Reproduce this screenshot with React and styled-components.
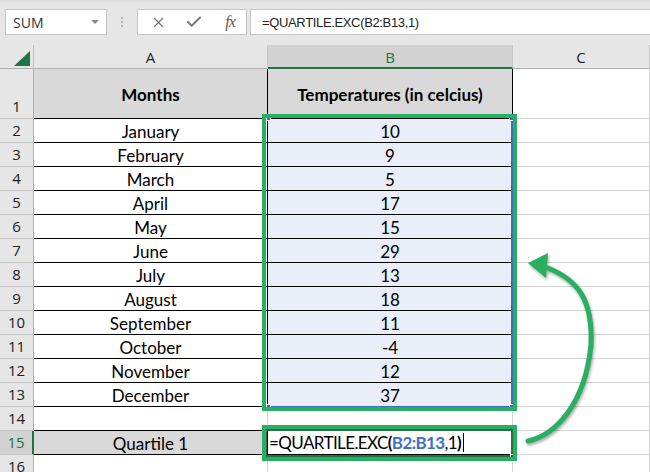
import React from 'react';
import styled, { createGlobalStyle, css } from 'styled-components';
import { X, Check } from 'lucide-react';

const GlobalStyle = createGlobalStyle`
  html, body {
    margin: 0;
    padding: 0;
    background: #ffffff;
    overflow: hidden;
  }
  * {
    box-sizing: border-box;
  }
`;

const GREEN = '#2aaf62';
const XL_GREEN = '#217346';
const GRID = '#d4d4d4';

const Page = styled.div`
  position: relative;
  width: 650px;
  height: 472px;
  overflow: hidden;
  font-family: 'Open Sans', 'Liberation Sans', sans-serif;
`;

const FormulaBar = styled.div`
  display: flex;
  align-items: flex-start;
  height: 45px;
  padding-top: 9px;
  background: linear-gradient(#d8d8d8 0, #e6e6e6 3px);
`;

const NameBox = styled.div`
  display: flex;
  align-items: center;
  justify-content: space-between;
  width: 102px;
  height: 26px;
  margin-left: 5px;
  padding: 0 7px 0 7px;
  background: #fff;
  border: 1px solid #c6c6c6;
  font-size: 14px;
  color: #333;
`;

const DropCaret = styled.span`
  width: 0;
  height: 0;
  border-left: 4px solid transparent;
  border-right: 4px solid transparent;
  border-top: 4px solid #8a8a8a;
`;

const Grip = styled.div`
  display: flex;
  flex-direction: column;
  align-items: center;
  gap: 2px;
  width: 30px;
  padding-top: 8px;
  span {
    width: 2px;
    height: 2px;
    background: #b4b4b4;
  }
`;

const FxBox = styled.div`
  display: grid;
  grid-template-columns: repeat(3, 36px);
  align-items: center;
  justify-items: center;
  width: 110px;
  height: 26px;
  padding-left: 2px;
  background: #fff;
  border: 1px solid #c6c6c6;
  color: #707070;
`;

const FxText = styled.span`
  font-family: 'Liberation Serif', 'DejaVu Serif', serif;
  font-style: italic;
  font-size: 16px;
  color: #5a5a5a;
  letter-spacing: -1px;
`;

const FormulaInput = styled.div`
  flex: 1;
  display: flex;
  align-items: center;
  height: 26px;
  margin-left: 3px;
  padding-left: 11px;
  background: #fff;
  border: 1px solid #c6c6c6;
  border-right: none;
  font-family: 'Liberation Sans', Arial, sans-serif;
  font-size: 13px;
  letter-spacing: -0.35px;
  color: #222;
`;

const Sheet = styled.div`
  position: relative;
  display: grid;
  grid-template-columns: 34px 234px 245px 1fr;
  grid-template-rows: 24px 50px repeat(15, 24px);
`;

const Corner = styled.div`
  position: relative;
  background: #e6e6e6;
  border-right: 1px solid #c0c0c0;
  border-bottom: 1px solid #b0b0b0;
  &::after {
    content: '';
    position: absolute;
    left: 14px;
    top: 6px;
    width: 16px;
    height: 15px;
    background: ${XL_GREEN};
    clip-path: polygon(100% 0, 100% 100%, 0 100%);
  }
`;

const ColHead = styled.div`
  display: flex;
  align-items: center;
  justify-content: center;
  background: ${p => (p.$active ? '#d2d2d2' : '#e6e6e6')};
  border-right: 1px solid #c6c6c6;
  border-bottom: ${p => (p.$active ? `2px solid ${XL_GREEN}` : '1px solid #b0b0b0')};
  color: ${p => (p.$active ? XL_GREEN : '#222')};
  font-size: 15px;
  padding-top: ${p => (p.$active ? '1px' : '0')};
`;

const RowHead = styled.div`
  display: flex;
  align-items: flex-end;
  justify-content: center;
  padding-bottom: 1px;
  background: ${p => (p.$active ? '#d2d2d2' : '#e6e6e6')};
  border-right: ${p => (p.$active ? `2px solid ${XL_GREEN}` : '1px solid #b0b0b0')};
  border-bottom: 1px solid #c6c6c6;
  color: ${p => (p.$active ? XL_GREEN : '#222')};
  font-size: 15px;
  line-height: 22px;
`;

const fills = {
  gray: '#d9d9d9',
  blue: '#e9eef8',
  none: '#ffffff',
};

const Cell = styled.div`
  display: flex;
  align-items: center;
  justify-content: ${p => (p.$left ? 'flex-start' : 'center')};
  padding: ${p => (p.$left ? '0 0 0 1px' : '1px 0 0 0')};
  background: ${p => fills[p.$fill || 'none']};
  border-right: 1px solid ${p => (p.$boxed ? '#000' : GRID)};
  border-bottom: 1px solid ${p => (p.$boxed || p.$under ? '#000' : GRID)};
  font-family: Lato, 'Open Sans', sans-serif;
  font-size: 17px;
  font-weight: ${p => (p.$bold ? 700 : 400)};
  letter-spacing: ${p => (p.$left ? '-0.6px' : 'normal')};
  color: #000;
  white-space: nowrap;
`;

const Ref = styled.span`
  color: #3b6fc9;
  font-weight: 700;
`;

const Paren = styled.span`
  font-weight: 700;
`;

const TextCaret = styled.span`
  display: inline-block;
  width: 1px;
  height: 19px;
  margin-left: 2px;
  background: #000;
`;

const Outline = styled.div`
  position: absolute;
  pointer-events: none;
  ${p => p.$kind === 'note' && css`
    border: 4px solid ${GREEN};
  `}
  ${p => p.$kind === 'range' && css`
    border: 1px solid #3a6cc8;
    border-right-width: 2px;
    border-left-color: transparent;
  `}
  ${p => p.$kind === 'active' && css`
    border: 2px solid ${XL_GREEN};
  `}
`;

const Handle = styled.span`
  position: absolute;
  width: 5px;
  height: 5px;
  background: ${p => p.$color || '#3a6cc8'};
  border: 1px solid #fff;
`;

const ArrowSvg = styled.svg`
  position: absolute;
  left: 515px;
  top: 245px;
  overflow: visible;
  filter: drop-shadow(1px 2px 1.5px rgba(0, 0, 0, 0.35));
`;

const temps = [
  ['January', 10],
  ['February', 9],
  ['March', 5],
  ['April', 17],
  ['May', 15],
  ['June', 29],
  ['July', 13],
  ['August', 18],
  ['September', 11],
  ['October', -4],
  ['November', 12],
  ['December', 37],
];

const Formula = () => (
  <>
    =QUARTILE.EXC<Paren>(</Paren>
    <Ref>B2:B13</Ref>,1<Paren>)</Paren>
    <TextCaret />
  </>
);

export default function App() {
  return (
    <Page>
      <GlobalStyle />
      <FormulaBar>
        <NameBox>
          SUM
          <DropCaret />
        </NameBox>
        <Grip>
          <span />
          <span />
          <span />
        </Grip>
        <FxBox>
          <X size={17} strokeWidth={1.6} />
          <Check size={18} strokeWidth={2.6} color="#7a7a7a" />
          <FxText>fx</FxText>
        </FxBox>
        <FormulaInput>=QUARTILE.EXC(B2:B13,1)</FormulaInput>
      </FormulaBar>

      <Sheet>
        <Corner />
        <ColHead>A</ColHead>
        <ColHead $active>B</ColHead>
        <ColHead>C</ColHead>

        <RowHead>1</RowHead>
        <Cell $fill="gray" $bold $boxed>Months</Cell>
        <Cell $fill="gray" $bold $boxed>Temperatures (in celcius)</Cell>
        <Cell />

        {temps.map(([month, value], i) => (
          <React.Fragment key={month}>
            <RowHead>{i + 2}</RowHead>
            <Cell $boxed>{month}</Cell>
            <Cell $boxed $fill="blue">{value}</Cell>
            <Cell />
          </React.Fragment>
        ))}

        <RowHead>14</RowHead>
        <Cell $under />
        <Cell $under />
        <Cell />

        <RowHead $active>15</RowHead>
        <Cell $fill="gray" $boxed>Quartile 1</Cell>
        <Cell $boxed $left><Formula /></Cell>
        <Cell />

        <RowHead>16</RowHead>
        <Cell />
        <Cell />
        <Cell />

        <Outline $kind="range" style={{ left: 267, top: 72, width: 246, height: 290 }}>
          <Handle style={{ left: -2, top: -2 }} />
          <Handle style={{ right: -3, top: -2 }} />
          <Handle style={{ left: -2, bottom: -3 }} />
          <Handle style={{ right: -3, bottom: -3 }} />
        </Outline>
        <Outline $kind="note" style={{ left: 262, top: 69, width: 255, height: 297 }} />

        <Outline $kind="active" style={{ left: 265, top: 384, width: 248, height: 28 }}>
          <Handle $color={XL_GREEN} style={{ right: -4, bottom: -4 }} />
        </Outline>
        <Outline $kind="note" style={{ left: 262, top: 380, width: 255, height: 36 }} />
      </Sheet>

      <ArrowSvg width="95" height="210" viewBox="0 0 95 210">
        <path
          d="M 13 196 C 40 190, 70 160, 76 100 C 78 55, 63 35, 33 23"
          fill="none"
          stroke={GREEN}
          strokeWidth="5"
          strokeLinecap="round"
        />
        <polygon points="13,18 33,8 31,33" fill={GREEN} />
      </ArrowSvg>
    </Page>
  );
}
